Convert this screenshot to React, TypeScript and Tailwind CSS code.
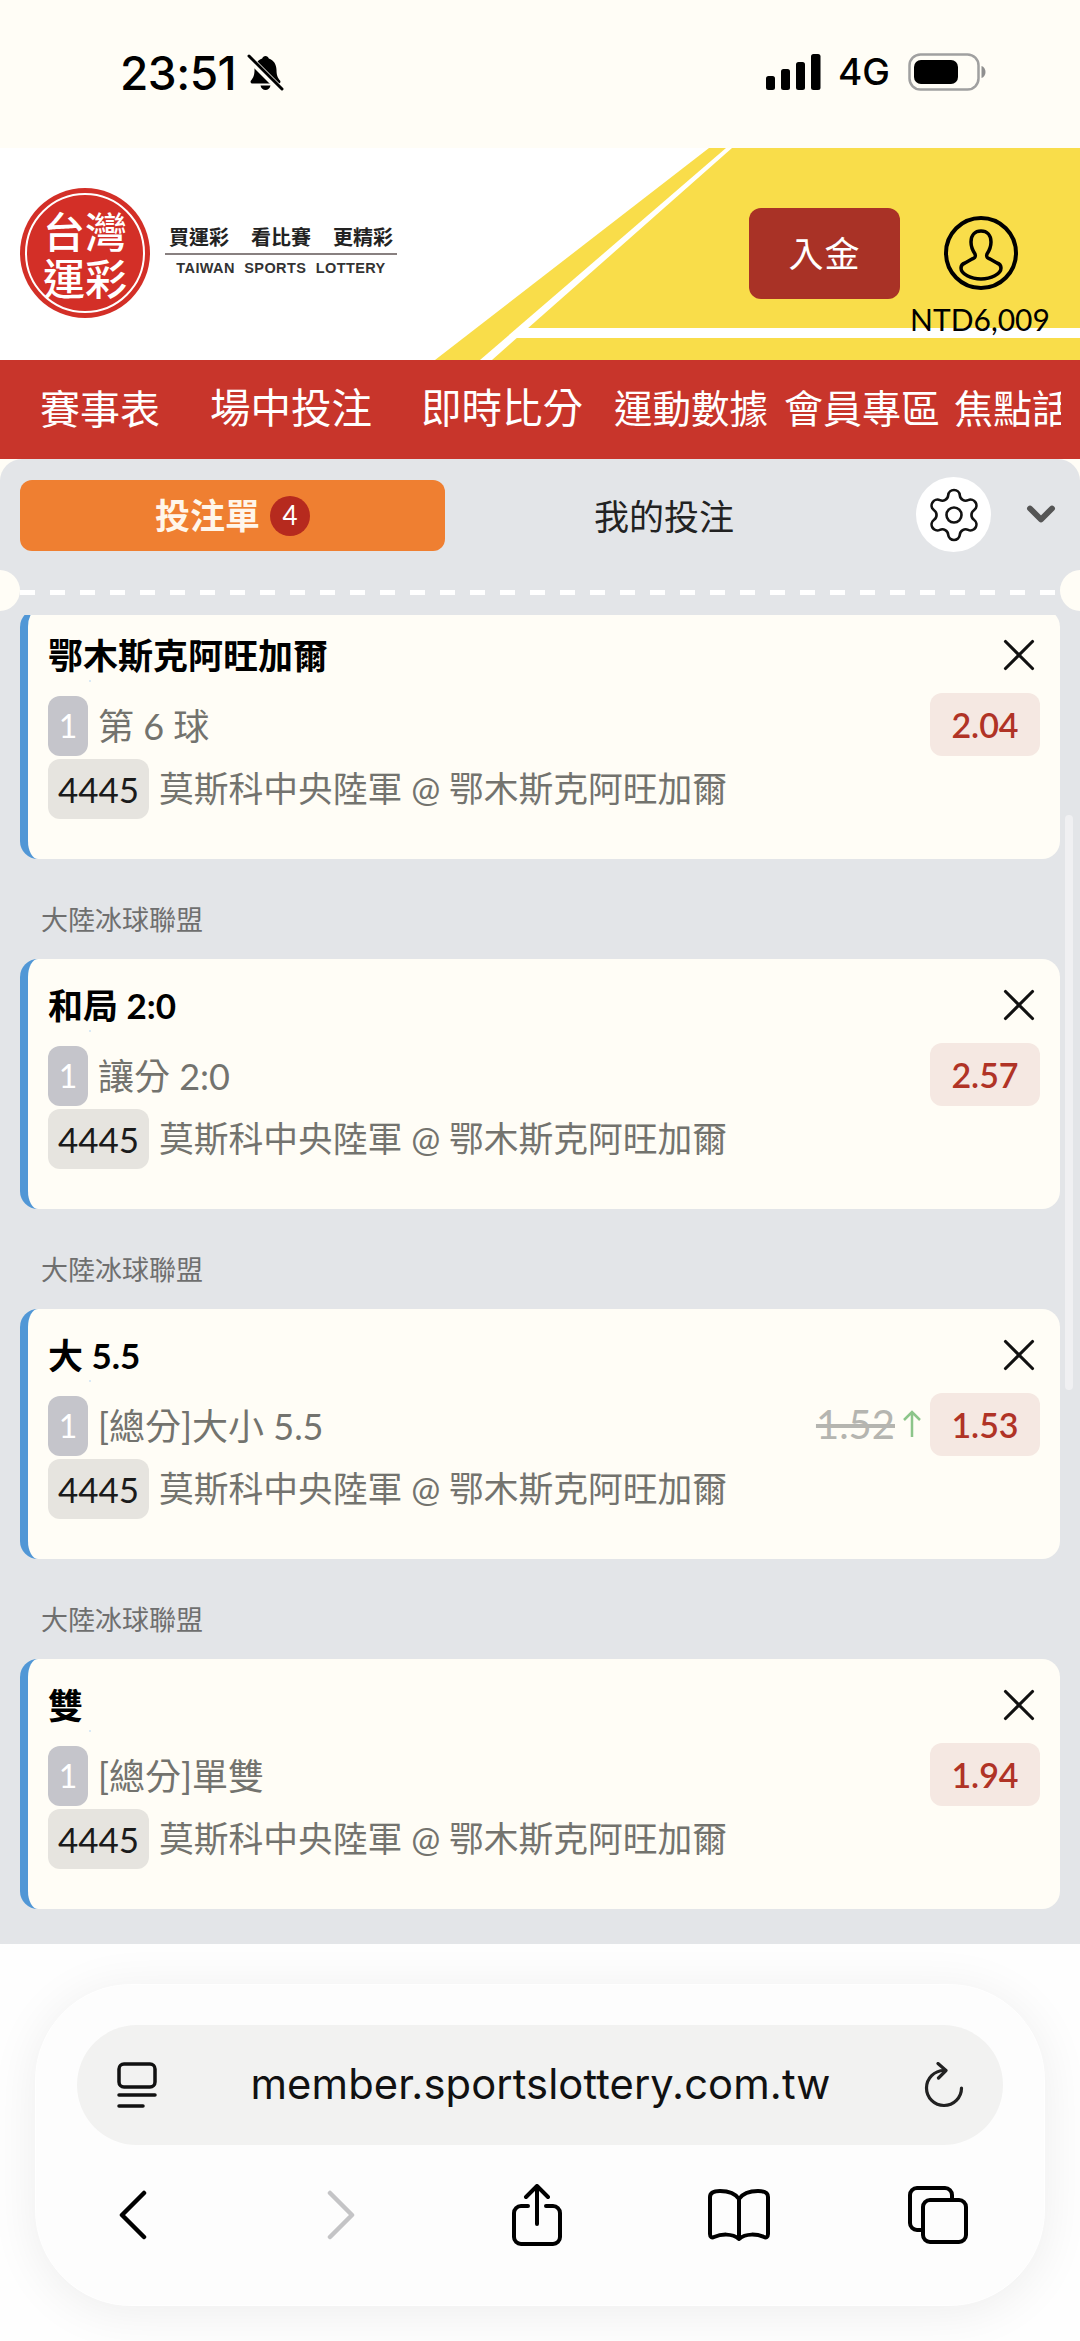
import { ChevronDown, Settings, X } from 'lucide-react'

const CJK = "font-['Lato','Noto_Sans_CJK_TC',sans-serif]"

type Bet = {
  title: string
  market: string
  odds: string
  oldOdds?: string
}

const bets: Bet[] = [
  { title: '鄂木斯克阿旺加爾', market: '第 6 球', odds: '2.04' },
  { title: '和局 2:0', market: '讓分 2:0', odds: '2.57' },
  { title: '大 5.5', market: '[總分]大小 5.5', odds: '1.53', oldOdds: '1.52' },
  { title: '雙', market: '[總分]單雙', odds: '1.94' },
]

const navItems = [
  { label: '賽事表', className: 'ml-[40px] w-[121px] text-[40px]' },
  { label: '場中投注', className: 'ml-[49px] w-[162px] text-[40.5px]' },
  { label: '即時比分', className: 'ml-[49px] w-[162px] text-[40.5px]' },
  { label: '運動數據', className: 'ml-[31px] w-[154px] text-[38.5px]' },
  { label: '會員專區', className: 'ml-[16px] w-[156px] text-[39px]' },
  { label: '焦點話題', className: 'ml-[14px] w-[107px] text-[39px] overflow-hidden' },
]

export default function App() {
  return (
    <div className={`w-[1080px] h-[2341px] flex flex-col overflow-hidden bg-[#fffdf6] ${CJK}`}>
      <StatusBar />
      <Header />
      <nav className="h-[99px] shrink-0 flex items-center bg-[#c8352b] text-white leading-none pb-[2px]">
        {navItems.map((item) => (
          <span key={item.label} className={`${item.className} shrink-0 whitespace-nowrap`}>
            {item.label}
          </span>
        ))}
      </nav>
      <BetPanel />
      <SafariBar />
    </div>
  )
}

function StatusBar() {
  return (
    <div className="h-[148px] shrink-0 flex items-start justify-between bg-[#fffdf6] font-['Inter',sans-serif] text-black">
      <div className="flex items-center pl-[120px] pt-[47px]">
        <span className="text-[46px] leading-[52px] font-medium tracking-[-0.5px]">23:51</span>
        <BellOffIcon className="w-[37px] h-[38px] ml-[11px]" />
      </div>
      <div className="flex items-center pr-[94px] pt-[52px]">
        <SignalIcon className="w-[56px] h-[36px]" />
        <span className="ml-[17px] text-[37px] leading-[40px] font-medium">4G</span>
        <BatteryIcon className="w-[78px] h-[38px] ml-[18px]" />
      </div>
    </div>
  )
}

function Header() {
  return (
    <header className="relative h-[212px] shrink-0 flex items-start justify-between bg-white overflow-hidden">
      <svg className="absolute inset-0 w-full h-full" viewBox="0 0 1080 212">
        <polygon points="709,0 1080,0 1080,212 435,212" fill="#f9dd4a" />
        <polygon points="726,0 732,0 492,212 480,212" fill="#ffffff" />
        <polygon points="526,180 1080,180 1080,190 515,190" fill="#ffffff" />
      </svg>

      <div className="relative flex items-start pl-[20px] pt-[40px]">
        <div className="w-[130px] h-[130px] rounded-full bg-[#d32f27] p-[5px]">
          <div className="w-full h-full rounded-full border-[2px] border-white flex flex-col items-center justify-center text-white font-medium text-[42px] leading-[47px] font-['Noto_Sans_CJK_TC',sans-serif]">
            <span>台灣</span>
            <span>運彩</span>
          </div>
        </div>
        <div className="ml-[15px] mt-[36px] w-[232px] flex flex-col items-stretch text-[#222222]">
          <div className="flex justify-between px-[4px] text-[20px] leading-[26px] font-bold font-['Noto_Sans_CJK_TC',sans-serif]">
            <span>買運彩</span>
            <span>看比賽</span>
            <span>更精彩</span>
          </div>
          <div className="h-[2px] bg-[#888080] mt-[3px]" />
          <span className="mt-[3px] text-center text-[14.5px] leading-[20px] font-bold tracking-[0.4px] [word-spacing:5px] font-['Liberation_Sans',sans-serif] text-[#333333] whitespace-nowrap">
            TAIWAN SPORTS LOTTERY
          </span>
        </div>
      </div>

      <div className="relative flex items-start pt-[60px] pr-[31px]">
        <button className="w-[151px] h-[91px] rounded-[12px] bg-[#a93226] text-white text-[35px] tracking-[1px]">
          入金
        </button>
        <div className="ml-[11px] mt-[8px] w-[138px] flex flex-col items-center">
          <ProfileIcon className="w-[74px] h-[74px] translate-x-[1px]" />
          <span className="mt-[12px] text-[30px] leading-[34px] text-black whitespace-nowrap">NTD6,009</span>
        </div>
      </div>
    </header>
  )
}

function BetPanel() {
  return (
    <main className="relative flex-1 min-h-0 flex flex-col bg-[#e3e5e8] rounded-t-[22px] overflow-hidden">
      <div className="h-[118px] shrink-0 flex items-start pt-[21px] pl-[20px]">
        <div className="w-[425px] h-[71px] rounded-[12px] bg-[#ef7f31] flex items-center justify-center">
          <span className="text-[35px] leading-none font-bold text-[#fff6ea]">投注單</span>
          <span className="ml-[10px] w-[40px] h-[40px] rounded-full bg-[#b62a1e] text-white text-[26px] flex items-center justify-center">
            4
          </span>
        </div>
        <span className="ml-[149px] mt-[16px] w-[140px] text-[35px] leading-[40px] text-[#222222] whitespace-nowrap">我的投注</span>
        <span className="ml-[182px] -mt-[3px] w-[75px] h-[75px] rounded-full bg-white flex items-center justify-center">
          <Settings className="w-[60px] h-[60px] text-[#111111]" strokeWidth={1.05} />
        </span>
        <ChevronDown className="ml-[28px] mt-[12px] w-[44px] h-[44px] text-[#555555]" strokeWidth={3.2} />
      </div>

      <div className="relative h-[38px] shrink-0">
        <div className="absolute left-[20px] right-[20px] top-[13px] h-[5px] bg-[repeating-linear-gradient(90deg,#ffffff_0,#ffffff_15px,transparent_15px,transparent_30px)]" />
        <span className="absolute -left-[21px] top-[-7px] w-[41px] h-[41px] rounded-full bg-[#fffdf6]" />
        <span className="absolute -right-[21px] top-[-7px] w-[41px] h-[41px] rounded-full bg-[#fffdf6]" />
      </div>

      <div className="relative flex-1 min-h-0 overflow-hidden px-[20px]">
        <div className="-mt-[6px]">
          {bets.map((bet, i) => (
            <div key={bet.title}>
              {i > 0 && (
                <div className="h-[100px] pt-[41px] pl-[21px] text-[27px] leading-[40px] text-[#6f6f6f]">
                  大陸冰球聯盟
                </div>
              )}
              <BetCard bet={bet} />
            </div>
          ))}
        </div>
        {/* scrollbar thumb */}
        <span className="absolute right-[7px] top-[200px] w-[8px] h-[575px] rounded-full bg-[#f0f0f2]" />
      </div>
    </main>
  )
}

function BetCard({ bet }: { bet: Bet }) {
  return (
    <div className="relative h-[250px] w-[1040px] rounded-[18px] border-l-[8px] border-[#5197d6] bg-[#fffdf6] pl-[20px] pr-[20px] pt-[26px]">
      <div className="h-[40px] flex items-center justify-between">
        <h3 className="text-[35px] leading-[40px] font-bold text-black whitespace-nowrap">{bet.title}</h3>
        <X className="w-[54px] h-[54px] text-[#111111] -my-[7px] -mr-[6px]" strokeWidth={1.4} />
      </div>
      <span className="absolute left-[61px] top-[71px] w-[2px] h-[2px] rounded-full bg-[#cfe3f5]" />
      <div className="mt-[21px] h-[60px] flex items-center">
        <span className="w-[40px] h-[60px] rounded-[12px] bg-[#c5c5cb] text-white text-[32px] flex items-center justify-center">
          1
        </span>
        <span className="ml-[10px] text-[36px] text-[#73736e] whitespace-nowrap">{bet.market}</span>
        <div className="ml-auto flex items-center -mt-[4px]">
          {bet.oldOdds && (
            <>
              <span className="text-[40px] leading-[48px] text-[#b5b5b0] line-through">{bet.oldOdds}</span>
              <ArrowUpIcon className="ml-[7px] w-[20px] h-[30px] mr-[8px]" />
            </>
          )}
          <span className="w-[110px] h-[63px] rounded-[12px] bg-[#f5e8e2] text-[#b03326] text-[34px] font-semibold flex items-center justify-center">
            {bet.odds}
          </span>
        </div>
      </div>
      <div className="mt-[3px] h-[60px] flex items-center">
        <span className="w-[101px] h-[60px] rounded-[12px] bg-[#e6e4df] text-[#1b1b1b] text-[35px] flex items-center justify-center">
          4445
        </span>
        <span className="ml-[10px] text-[34.75px] text-[#73736e] whitespace-nowrap">莫斯科中央陸軍 @ 鄂木斯克阿旺加爾</span>
      </div>
    </div>
  )
}

function SafariBar() {
  return (
    <div className="h-[397px] shrink-0 bg-[#fefefe] pt-[40px] px-[35px] font-['Inter',sans-serif]">
      <div className="h-[322px] rounded-[96px] bg-[#fdfdfd] border border-white shadow-[0_6px_50px_rgba(0,0,0,0.07)] pt-[40px] px-[41px]">
        <div className="h-[120px] rounded-[60px] bg-[#f2f2f1] flex items-center justify-between pl-[40px] pr-[39px]">
          <ReaderIcon className="w-[40px] h-[46px]" />
          <span className="text-[41.7px] leading-none text-[#111111] tracking-[0.1px] whitespace-nowrap">
            member.sportslottery.com.tw
          </span>
          <ReloadIcon className="w-[40px] h-[46px]" />
        </div>
        <div className="mt-[39px] flex items-center pl-[42px]">
          <ChevronIcon className="w-[28px] h-[50px] text-black" dir="left" />
          <ChevronIcon className="ml-[180px] w-[28px] h-[50px] text-[#c4c4c6]" dir="right" />
          <ShareIcon className="ml-[157px] w-[50px] h-[62px]" />
          <BookIcon className="ml-[146px] w-[62px] h-[52px]" />
          <TabsIcon className="ml-[138px] w-[60px] h-[58px]" />
        </div>
      </div>
    </div>
  )
}

// =============================================================================
// Icons
// =============================================================================

function BellOffIcon({ className }: { className?: string }) {
  return (
    <svg className={className} viewBox="0 0 37 38">
      <path
        d="M18.500 2c1.600 0 2.800 1 3.300 2.400C26.800 6 29.500 10.500 29.500 16c0 5 1 7.500 3.500 10.500 1 1.300.2 3-1.500 3H5.500c-1.700 0-2.500-1.700-1.500-3C6.500 23.500 7.500 21 7.500 16c0-5.500 2.700-10 7.700-11.600C15.700 3 16.900 2 18.500 2z"
        fill="#000"
      />
      <path d="M13.500 31.500h10c-.6 2.800-2.600 4.500-5 4.500s-4.400-1.700-5-4.500z" fill="#000" />
      <path d="M1 3l33 33" stroke="#fffdf6" strokeWidth="7" />
      <path d="M2 2l33 33" stroke="#000" strokeWidth="3" strokeLinecap="round" />
    </svg>
  )
}

function SignalIcon({ className }: { className?: string }) {
  return (
    <svg className={className} viewBox="0 0 56 36" fill="#000">
      <rect x="1" y="22" width="9" height="14" rx="2.500" />
      <rect x="16" y="15" width="9" height="21" rx="2.500" />
      <rect x="31" y="8" width="9" height="28" rx="2.500" />
      <rect x="46" y="0" width="9.500" height="36" rx="2.500" />
    </svg>
  )
}

function BatteryIcon({ className }: { className?: string }) {
  return (
    <svg className={className} viewBox="0 0 78 38">
      <rect x="1.500" y="1.500" width="69" height="35" rx="11" fill="none" stroke="#a0a0a0" strokeWidth="2.500" />
      <rect x="6" y="7" width="44" height="24" rx="7" fill="#000" />
      <path d="M73.500 13c2.500.8 4 3 4 6s-1.500 5.200-4 6z" fill="#8f8f8f" />
    </svg>
  )
}

function ProfileIcon({ className }: { className?: string }) {
  return (
    <svg className={className} viewBox="0 0 74 74" fill="none" stroke="#000" strokeWidth="3.500">
      <circle cx="37" cy="37" r="35" strokeWidth="4" />
      <path
        transform="translate(37 37)"
        d="M-10-11C-10-18-6-22 0-22 6-22 10-18 10-11 10-6 8-2 6 1 5 4 6 5 9 6L16 10C19 11 20 13 20 15 20 21 10 26 0 26-10 26-20 21-20 15-20 13-19 11-16 10L-9 6C-6 5-5 4-6 1-8-2-10-6-10-11Z"
        strokeLinejoin="round"
      />
    </svg>
  )
}

function ArrowUpIcon({ className }: { className?: string }) {
  return (
    <svg className={className} viewBox="0 0 20 30" fill="none" stroke="#8cc58a" strokeWidth="2.500">
      <path d="M10 28V3M2 11l8-8 8 8" />
    </svg>
  )
}

function ReaderIcon({ className }: { className?: string }) {
  return (
    <svg className={className} viewBox="0 0 40 46" fill="none" stroke="#111" strokeWidth="3.500" strokeLinecap="round">
      <rect x="2" y="2" width="36" height="23" rx="5" />
      <path d="M2 33h36M2 44h24" />
    </svg>
  )
}

function ReloadIcon({ className }: { className?: string }) {
  return (
    <svg className={className} viewBox="0 0 40 46" fill="none" stroke="#222" strokeWidth="3.200" strokeLinecap="round" strokeLinejoin="round">
      <path d="M20 8.500A17.500 17.500 0 1 0 37.500 26" />
      <path d="M14 1.500l8 7-7.500 7.500" />
    </svg>
  )
}

function ChevronIcon({ className, dir }: { className?: string; dir: 'left' | 'right' }) {
  return (
    <svg className={className} viewBox="0 0 28 50" fill="none" stroke="currentColor" strokeWidth="4.500" strokeLinecap="round" strokeLinejoin="round">
      <path d={dir === 'left' ? 'M25 3L3 25l22 22' : 'M3 3l22 22L3 47'} />
    </svg>
  )
}

function ShareIcon({ className }: { className?: string }) {
  return (
    <svg className={className} viewBox="0 0 50 62" fill="none" stroke="#000" strokeWidth="4" strokeLinecap="round" strokeLinejoin="round">
      <path d="M16 22H9a7 7 0 0 0-7 7v24a7 7 0 0 0 7 7h32a7 7 0 0 0 7-7V29a7 7 0 0 0-7-7h-7" />
      <path d="M25 40V3M14 13L25 2l11 11" />
    </svg>
  )
}

function BookIcon({ className }: { className?: string }) {
  return (
    <svg className={className} viewBox="0 0 62 52" fill="none" stroke="#000" strokeWidth="4" strokeLinecap="round" strokeLinejoin="round">
      <path d="M31 10C27 4 20 2 12 2 7 2 2 3 2 8v37c0 3 2 4 4 3 7-3 18-4 25 2 7-6 18-5 25-2 2 1 4 0 4-3V8c0-5-5-6-10-6-8 0-15 2-19 8zM31 10v39" />
    </svg>
  )
}

function TabsIcon({ className }: { className?: string }) {
  return (
    <svg className={className} viewBox="0 0 60 58" fill="none" stroke="#000" strokeWidth="4">
      <path d="M44 13V9a7 7 0 0 0-7-7H9a7 7 0 0 0-7 7v28a7 7 0 0 0 7 7h6" />
      <rect x="15" y="14" width="43" height="42" rx="7" />
    </svg>
  )
}
